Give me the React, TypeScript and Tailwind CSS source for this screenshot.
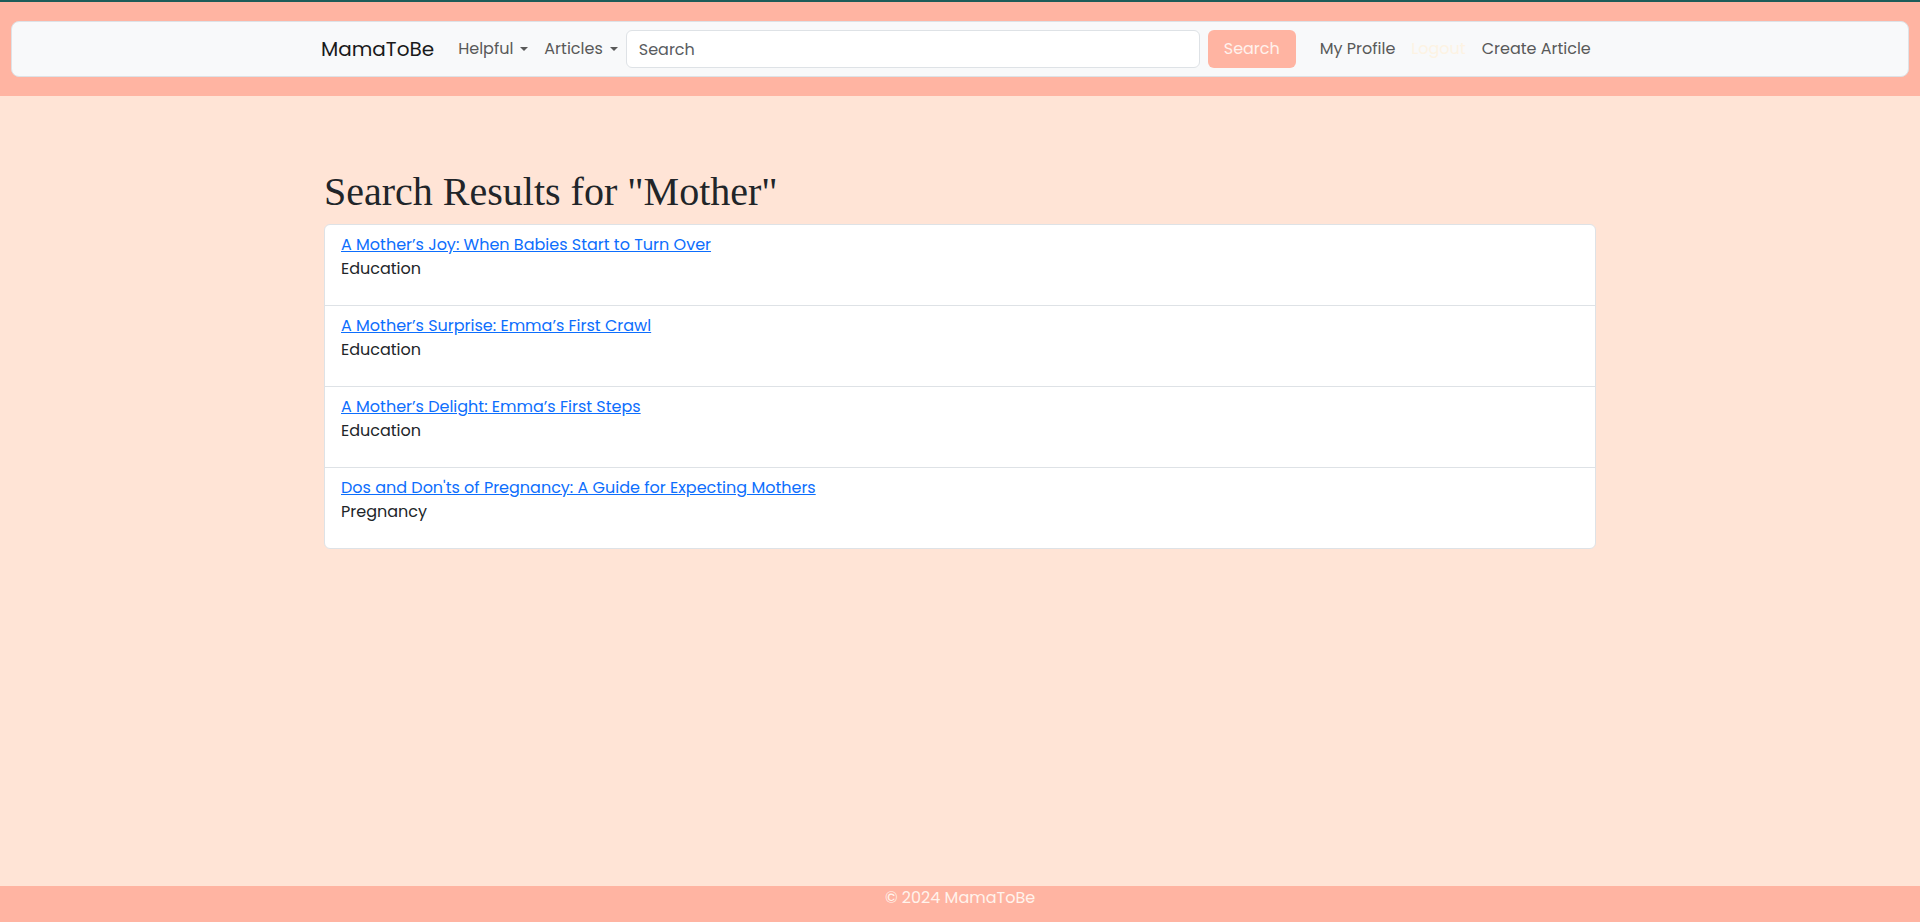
import React from 'react';

const results = [
  { title: 'A Mother’s Joy: When Babies Start to Turn Over', category: 'Education' },
  { title: 'A Mother’s Surprise: Emma’s First Crawl', category: 'Education' },
  { title: 'A Mother’s Delight: Emma’s First Steps', category: 'Education' },
  { title: "Dos and Don'ts of Pregnancy: A Guide for Expecting Mothers", category: 'Pregnancy' },
];

const Caret = () => (
  <span className="ml-[7px] inline-block h-0 w-0 border-x-[4.8px] border-t-[4.8px] border-x-transparent border-t-current align-middle" />
);

const App: React.FC = () => {
  return (
    <div className="flex h-screen flex-col bg-[#ffe4d6] font-['Poppins','Open_Sans',sans-serif] text-[16px] text-[#212529]">
      {/* Header */}
      <header className="border-t-2 border-[#1d5c5a] bg-[#ffb4a2] px-[11px] py-[19px]">
        <nav className="rounded-lg border border-[#dee2e6] bg-[#f8f9fa] py-2">
          <div className="mx-auto flex w-[1278px] items-center whitespace-nowrap">
            <a href="#" className="mr-4 shrink-0 text-[20px] leading-[30px] text-[#1a1a1a]">MamaToBe</a>
            <a href="#" className="flex shrink-0 items-center px-2 leading-6 text-[#595959]">Helpful<Caret /></a>
            <a href="#" className="flex shrink-0 items-center px-2 leading-6 text-[#595959]">Articles<Caret /></a>
            <form className="flex shrink-0 items-center" onSubmit={(e) => e.preventDefault()}>
              <input
                type="text"
                placeholder="Search"
                className="h-[38px] w-[574px] rounded-md border border-[#dee2e6] bg-white px-3 text-[16px] placeholder:text-[#595c5f] focus:outline-none"
              />
              <button className="ml-2 h-[38px] w-[88px] rounded-md bg-[#ffb4a2] text-[#fff2ed]">Search</button>
            </form>
            <a href="#" className="ml-4 shrink-0 px-2 leading-6 text-[#595959]">My Profile</a>
            <a href="#" className="shrink-0 px-2 leading-6 text-[#fdf3e3]">Logout</a>
            <a href="#" className="shrink-0 px-2 leading-6 text-[#595959]">Create Article</a>
          </div>
        </nav>
      </header>

      {/* Results */}
      <main className="flex-1">
        <div className="mx-auto w-[1272px] pt-[72px]">
          <h1 className="mb-2 font-['Liberation_Serif','Times_New_Roman',serif] text-[40px] leading-[1.2] text-[#212529]">
            Search Results for "Mother"
          </h1>
          <ul className="overflow-hidden rounded-md border border-[#dee2e6] bg-white">
            {results.map((r, i) => (
              <li key={i} className={`px-4 py-2 ${i > 0 ? 'border-t border-[#dee2e6]' : ''}`}>
                <a href="#" className="leading-6 text-[#0d6efd] underline">{r.title}</a>
                <p className="mb-4 leading-6">{r.category}</p>
              </li>
            ))}
          </ul>
        </div>
      </main>

      {/* Footer */}
      <footer className="h-[36px] bg-[#ffb4a2] text-center leading-6 text-[#fff3ec]">
        © 2024 MamaToBe
      </footer>
    </div>
  );
};

export default App;
